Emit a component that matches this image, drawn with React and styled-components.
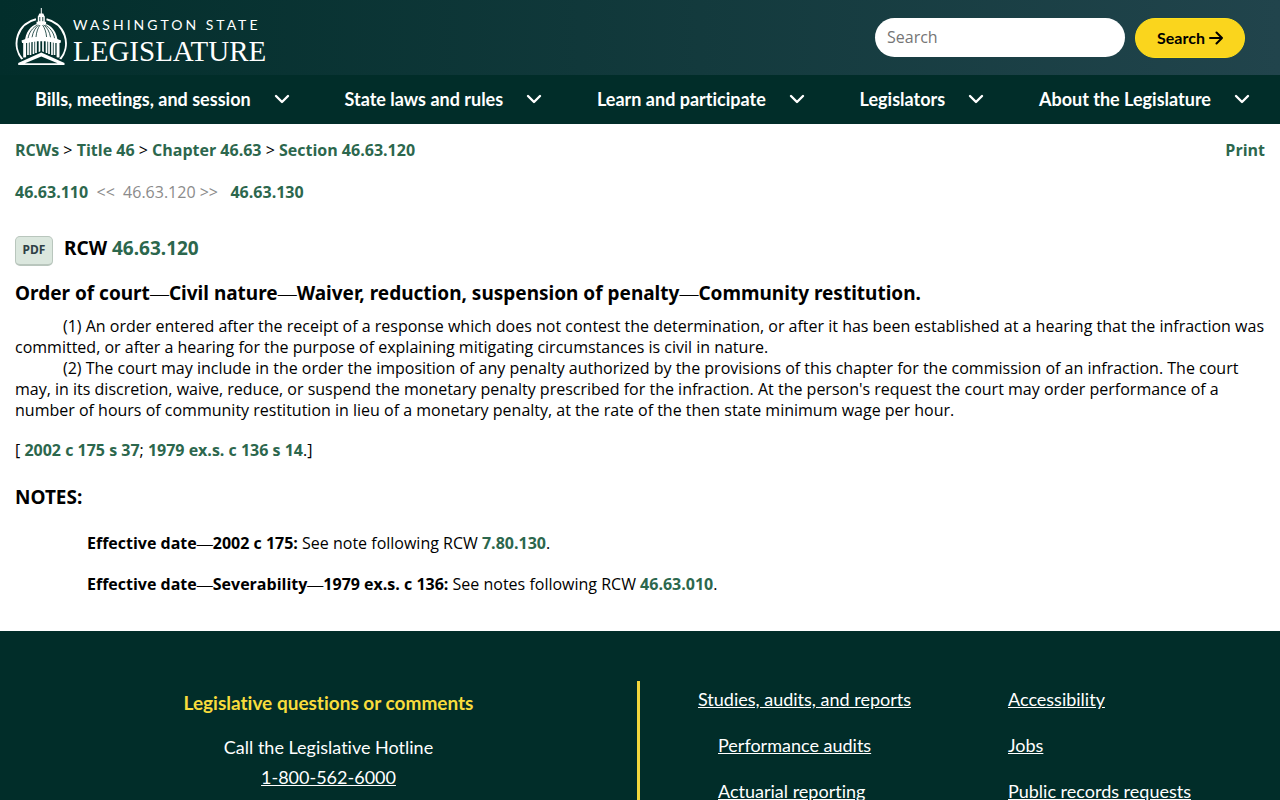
import React from 'react';
import styled, { createGlobalStyle } from 'styled-components';

const GlobalStyle = createGlobalStyle`
    * {
        box-sizing: border-box;
    }
    body {
        margin: 0;
        background-color: #fff;
        color: #000;
        font-family: "Open Sans", "Noto Sans", sans-serif;
        font-size: 16px;
        line-height: 21px;
        font-variant-ligatures: none;
    }
`;

const display = 'Lato, "Open Sans", sans-serif';

const TopBar = styled.header`
    display: flex;
    align-items: center;
    justify-content: space-between;
    height: 75px;
    padding: 0 35px 0 15px;
    background: linear-gradient(90deg, #022e2b, #21444c);
`;

const Brand = styled.a`
    display: flex;
    align-items: center;
    gap: 5px;
    color: #fff;
    text-decoration: none;
`;

const BrandText = styled.span`
    display: flex;
    flex-direction: column;
    padding-top: 6px;
`;

const BrandState = styled.span`
    font-family: ${display};
    font-size: 14px;
    line-height: 20px;
    letter-spacing: 3px;
`;

const BrandName = styled.span`
    font-family: "Liberation Serif", serif;
    font-size: 29px;
    line-height: 32px;
`;

const SearchForm = styled.form`
    display: flex;
    gap: 10px;
`;

const SearchInput = styled.input`
    width: 250px;
    height: 39px;
    padding: 0 12px;
    border: 0;
    border-radius: 20px;
    background-color: #fff;
    font-family: "Open Sans", "Noto Sans", sans-serif;
    font-size: 16px;

    &::placeholder {
        color: #757575;
    }
`;

const SearchButton = styled.button`
    display: flex;
    align-items: center;
    justify-content: center;
    gap: 4px;
    width: 110px;
    height: 40px;
    padding: 0;
    border: 1px solid #ffe01a;
    border-radius: 20px;
    background-color: #fad51d;
    color: #000;
    font-family: ${display};
    font-size: 16px;
    font-weight: 700;
    cursor: pointer;
`;

const NavBar = styled.nav`
    display: flex;
    justify-content: space-between;
    align-items: center;
    height: 49px;
    padding: 0 30px 2px 35px;
    background-color: #012d29;
`;

const NavItem = styled.button`
    display: flex;
    align-items: center;
    gap: 23px;
    padding: 0;
    border: 0;
    background: none;
    color: #fff;
    font-family: ${display};
    font-size: 18px;
    font-weight: 700;
    font-variant-ligatures: none;
    line-height: 24px;
    cursor: pointer;
`;

const Content = styled.main`
    padding: 16px 15px 36px;
`;

const Link = styled.a`
    color: #2c674d;
    font-weight: 700;
    text-decoration: none;
`;

const Crumbs = styled.div`
    display: flex;
    justify-content: space-between;
`;

const Pager = styled.div`
    display: flex;
    margin-top: 21px;
    color: #8b8b8b;
    white-space: pre;
`;

const Title = styled.h1`
    display: flex;
    align-items: center;
    gap: 11px;
    margin: 27px 0 0;
    font-family: "Noto Sans", sans-serif;
    font-size: 19px;
    line-height: 26px;
`;

const PdfLink = styled.a`
    width: 38px;
    height: 30px;
    margin-top: 6px;
    border: 1px solid #b9c6bd;
    border-bottom-width: 2px;
    border-radius: 5px;
    background-color: #dbe7de;
    color: #2f4046;
    font-size: 12px;
    line-height: 26px;
    text-align: center;
    text-decoration: none;
`;

const Heading = styled.h2`
    margin: ${props => props.$top} 0 0;
    font-family: "Noto Sans", sans-serif;
    font-size: 19px;
    line-height: 26px;
`;

const Dash = styled.span`
    font-family: "Liberation Serif", serif;
    font-weight: 400;
`;

const Law = styled.div`
    margin-top: 9px;
`;

const Paragraph = styled.p`
    margin: 0;
    text-indent: 48px;
`;

const History = styled.p`
    margin: 19px 0 0;
`;

const Note = styled.p`
    margin: 20px 0 0;
    padding-left: 72px;
`;

const Notes = styled.section`
    display: flow-root;
    padding-top: 3px;
`;

const Footer = styled.footer`
    display: grid;
    grid-template-columns: 1fr 1fr;
    padding: 50px 0 0;
    background-color: #012d29;
    color: #fff;
    font-family: ${display};
    font-size: 18px;
    line-height: 30px;
`;

const Contact = styled.section`
    padding: 7px 0 0 20px;
    border-right: 3px solid #f2d63c;
    text-align: center;
`;

const ContactTitle = styled.h2`
    margin: 0 0 14px;
    color: #f8dc3c;
    font-size: 19px;
    line-height: 30px;
`;

const ContactLine = styled.div`
    line-height: 30px;
`;

const FooterLinks = styled.div`
    display: grid;
    grid-template-columns: 310px 1fr;
    padding: 3px 0 0 58px;
`;

const LinkList = styled.ul`
    display: flex;
    flex-direction: column;
    gap: 16px;
    margin: 0;
    padding: 0 0 16px;
    list-style: none;
`;

const LinkEntry = styled.li`
    padding-left: ${props => (props.$nested ? '20px' : '0')};
`;

const FooterLink = styled.a`
    color: #fff;
    text-decoration: underline;
`;

const navItems = [
    'Bills, meetings, and session',
    'State laws and rules',
    'Learn and participate',
    'Legislators',
    'About the Legislature',
];

// each column is [x, bottom]
const columns = [
    [28, 54],
    [30.5, 54],
    [33.5, 53],
    [36, 52],
    [39.5, 51],
    [43, 51],
    [46.5, 52],
    [49, 53],
    [52, 54],
    [54.5, 54],
];

const Dome = () => (
    <svg width="53" height="60" viewBox="15 7 53 60" fill="none" aria-hidden="true">
        <path d="M36 18.2A24.8 24.8 0 0 0 22.5 58.5M46.5 18.2A24.8 24.8 0 0 1 60 58.5" stroke="#fff" strokeWidth="2" />
        <path d="M41.3 7v6" stroke="#fff" strokeWidth="1" />
        <path d="M39.3 12.5h4l1.2 2.8h-6.4zM37.8 15.3h7v5.5h-7zM36.5 20.8h9.6v2.4h-9.6z" fill="#fff" />
        <path d="M39.8 16v4.2M42.8 16v4.2" stroke="#02302d" strokeWidth="0.9" />
        <path d="M25 41C25 31.5 31 24.5 37 23h8.6C51.500 24.5 57.600 31.5 57.6 41c-10-3.6-22.600-3.6-32.600 0z" fill="#fff" />
        <path
            d="M28 37.5C29 31 33 26.5 37.5 24M32 36.5C33 30.5 35.5 26.5 38.8 24M36 36C36.5 30.5 38 27 40 24M54.6 37.5C53.6 31 49.6 26.5 45.1 24M50.6 36.5C49.6 30.5 47.1 26.5 43.8 24M46.6 36C46.1 30.5 44.6 27 42.6 24"
            stroke="#02302d"
            strokeWidth="0.8"
        />
        <path d="M26 40.6c9.500-3.400 21-3.400 30.600 0" stroke="#02302d" strokeWidth="0.8" />
        <path d="M21.5 39.5l4-1.5c10-3 21.600-3 31.600 0l4 1.500-.6 2.500H55c-8-2.400-19.400-2.400-27.400 0h-5.500z" fill="#fff" />
        {columns.map(([x, bottom]) => (
            <path key={x} d={`M${x} 40V${bottom}`} stroke="#fff" strokeWidth="1.7" />
        ))}
        <path d="M23.2 42h2.900v14.500h-2.900zM56.600 42h2.900v14.500h-2.900z" fill="#fff" />
        <path d="M41.3 50L19 59.500v2h44.600v-2z" fill="#02302d" />
        <path d="M41.3 51.500L64.500 62v2H18.200v-2z" fill="#fff" />
        <path d="M41.3 55.500L25 62.300h32.600z" fill="#02302d" />
    </svg>
);

const Chevron = () => (
    <svg width="16" height="10" viewBox="0 0 16 10" fill="none" aria-hidden="true">
        <path d="M2 2l6 6 6-6" stroke="#fff" strokeWidth="2.4" strokeLinecap="round" strokeLinejoin="round" />
    </svg>
);

const Arrow = () => (
    <svg width="14" height="14" viewBox="0 0 14 14" fill="none" aria-hidden="true">
        <path d="M1 7h12M7.5 1.5L13 7l-5.500 5.500" stroke="#000" strokeWidth="2" strokeLinecap="round" strokeLinejoin="round" />
    </svg>
);

const Header = () => (
    <>
        <TopBar>
            <Brand href="#home" aria-label="Washington State Legislature">
                <Dome />
                <BrandText>
                    <BrandState>WASHINGTON STATE</BrandState>
                    <BrandName>LEGISLATURE</BrandName>
                </BrandText>
            </Brand>
            <SearchForm onSubmit={event => event.preventDefault()}>
                <SearchInput type="text" placeholder="Search" aria-label="Search" />
                <SearchButton type="submit">
                    Search
                    <Arrow />
                </SearchButton>
            </SearchForm>
        </TopBar>
        <NavBar>
            {navItems.map(item => (
                <NavItem key={item} type="button">
                    {item}
                    <Chevron />
                </NavItem>
            ))}
        </NavBar>
    </>
);

const PageFooter = () => (
    <Footer>
        <Contact>
            <ContactTitle>Legislative questions or comments</ContactTitle>
            <ContactLine>Call the Legislative Hotline</ContactLine>
            <ContactLine>
                <FooterLink href="tel:1-800-562-6000">1-800-562-6000</FooterLink>
            </ContactLine>
        </Contact>
        <FooterLinks>
            <LinkList>
                <LinkEntry><FooterLink href="#studies">Studies, audits, and reports</FooterLink></LinkEntry>
                <LinkEntry $nested><FooterLink href="#performance">Performance audits</FooterLink></LinkEntry>
                <LinkEntry $nested><FooterLink href="#actuarial">Actuarial reporting</FooterLink></LinkEntry>
            </LinkList>
            <LinkList>
                <LinkEntry><FooterLink href="#accessibility">Accessibility</FooterLink></LinkEntry>
                <LinkEntry><FooterLink href="#jobs">Jobs</FooterLink></LinkEntry>
                <LinkEntry><FooterLink href="#records">Public records requests</FooterLink></LinkEntry>
            </LinkList>
        </FooterLinks>
    </Footer>
);

const App = () => (
    <>
        <GlobalStyle />
        <Header />
        <Content>
            <Crumbs>
                <div>
                    <Link href="#rcw">RCWs</Link> &gt; <Link href="#title">Title 46</Link> &gt;{' '}
                    <Link href="#chapter">Chapter 46.63</Link> &gt; <Link href="#section">Section 46.63.120</Link>
                </div>
                <Link href="#print">Print</Link>
            </Crumbs>
            <Pager>
                <Link href="#prev">46.63.110</Link>
                {'  <<  46.63.120 >>   '}
                <Link href="#next">46.63.130</Link>
            </Pager>
            <Title>
                <PdfLink href="#pdf">PDF</PdfLink>
                <span>RCW <Link href="#section">46.63.120</Link></span>
            </Title>
            <Heading $top="14px">
                Order of court<Dash>—</Dash>Civil nature<Dash>—</Dash>Waiver, reduction, suspension of
                penalty<Dash>—</Dash>Community restitution.
            </Heading>
            <Law>
                <Paragraph>
                    (1) An order entered after the receipt of a response which does not contest the determination, or
                    after it has been established at a hearing that the infraction was committed, or after a hearing for
                    the purpose of explaining mitigating circumstances is civil in nature.
                </Paragraph>
                <Paragraph>
                    (2) The court may include in the order the imposition of any penalty authorized by the provisions of
                    this chapter for the commission of an infraction. The court may, in its discretion, waive, reduce,
                    or suspend the monetary penalty prescribed for the infraction. At the person's request the court may
                    order performance of a number of hours of community restitution in lieu of a monetary penalty, at
                    the rate of the then state minimum wage per hour.
                </Paragraph>
            </Law>
            <History>
                [ <Link href="#2002">2002 c 175 s 37</Link>; <Link href="#1979">1979 ex.s. c 136 s 14</Link>.]
            </History>
            <Heading $top="23px">NOTES:</Heading>
            <Notes>
                <Note>
                    <b>Effective date<Dash>—</Dash>2002 c 175:</b> See note following RCW{' '}
                    <Link href="#7.80.130">7.80.130</Link>.
                </Note>
                <Note>
                    <b>Effective date<Dash>—</Dash>Severability<Dash>—</Dash>1979 ex.s. c 136:</b> See notes following
                    RCW <Link href="#46.63.010">46.63.010</Link>.
                </Note>
            </Notes>
        </Content>
        <PageFooter />
    </>
);

export default App;
